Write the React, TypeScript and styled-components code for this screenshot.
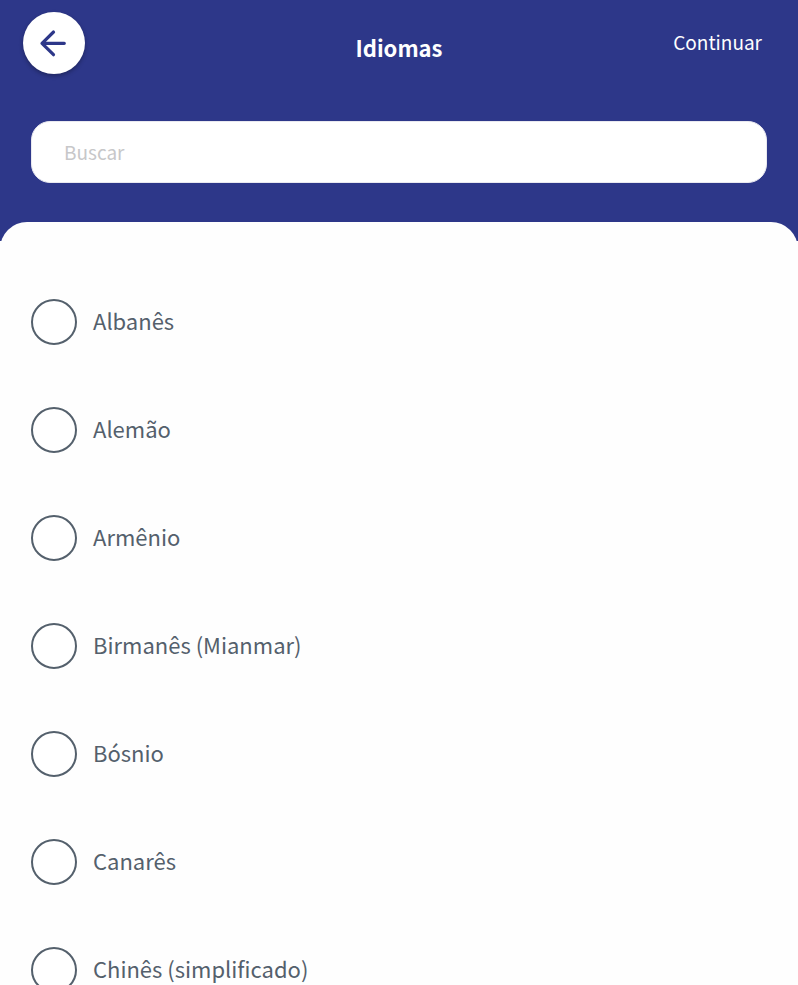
import React, { useState } from "react";
import styled, { createGlobalStyle } from "styled-components";

const blue = "#2d3789";
const slate = "#54606c";

const GlobalStyle = createGlobalStyle`
  *, *::before, *::after { box-sizing: border-box; }
  body {
    margin: 0;
    background: #fefefe;
    font-family: "Noto Sans CJK SC", "Noto Sans", sans-serif;
  }
  button, input { font-family: inherit; }
`;

const Screen = styled.div`
  display: flex;
  flex-direction: column;
  height: 100vh;
  overflow: hidden;
`;

const Header = styled.header`
  flex: none;
  padding: 12px 31px 58px;
  background: ${blue};
`;

const TopBar = styled.div`
  display: grid;
  grid-template-columns: 1fr auto 1fr;
  align-items: center;
  margin: 0 -8px 47px;
`;

const BackButton = styled.button`
  display: grid;
  place-items: center;
  width: 62px;
  height: 62px;
  padding: 0;
  border: 0;
  border-radius: 50%;
  background: #fff;
  color: ${blue};
  box-shadow: 0 2px 4px rgba(0, 0, 0, 0.3);
  cursor: pointer;
`;

const Title = styled.h1`
  margin: 0;
  padding-top: 8px;
  color: #fff;
  font-size: 22px;
  font-weight: 700;
  line-height: 32px;
`;

const ContinueButton = styled.button`
  justify-self: end;
  padding: 0 13px 2px;
  border: 0;
  background: none;
  color: #fff;
  font-size: 19px;
  line-height: 32px;
  cursor: pointer;
`;

const SearchInput = styled.input`
  display: block;
  width: 100%;
  height: 62px;
  padding: 0 32px 2px;
  border: 1px solid #e9e9f0;
  border-radius: 19px;
  background: #fff;
  color: ${slate};
  font-size: 19px;
  outline: 0;

  &::placeholder {
    color: #c7c7c9;
    opacity: 1;
  }
`;

const Panel = styled.main`
  flex: 1;
  min-height: 0;
  margin-top: -19px;
  padding: 77px 31px 0;
  border-radius: 27px 27px 0 0;
  background: #fefefe;
  overflow-y: auto;
  scrollbar-width: none;
`;

const LanguageList = styled.div`
  display: flex;
  flex-direction: column;
  gap: 62px;
`;

const LanguageOption = styled.label`
  display: flex;
  align-items: center;
  gap: 16px;
  color: ${slate};
  font-size: 22px;
  line-height: 28px;
  cursor: pointer;
`;

const LanguageName = styled.span`
  padding-bottom: 4px;
`;

const Radio = styled.input`
  flex: none;
  width: 46px;
  height: 46px;
  margin: 0;
  appearance: none;
  border: 2px solid ${slate};
  border-radius: 50%;
  background: #fff;
  cursor: pointer;

  &:checked {
    border-color: ${blue};
    background: radial-gradient(circle, ${blue} 50%, #fff 52%);
  }
`;

const languages = [
  "Albanês",
  "Alemão",
  "Armênio",
  "Birmanês (Mianmar)",
  "Bósnio",
  "Canarês",
  "Chinês (simplificado)",
];

function BackArrow() {
  return (
    <svg
      width="62"
      height="62"
      viewBox="0 0 62 62"
      fill="none"
      stroke="currentColor"
      strokeWidth="3.2"
      strokeLinecap="round"
      strokeLinejoin="round"
      aria-hidden="true"
    >
      <path d="M41.3 31.3H19M30.5 20L19 31.3L30.5 42.7" />
    </svg>
  );
}

export default function App() {
  const [query, setQuery] = useState("");
  const [selected, setSelected] = useState("");
  const shown = languages.filter((name) =>
    name.toLowerCase().includes(query.toLowerCase())
  );

  return (
    <Screen>
      <GlobalStyle />
      <Header>
        <TopBar>
          <BackButton type="button" aria-label="Voltar">
            <BackArrow />
          </BackButton>
          <Title>Idiomas</Title>
          <ContinueButton type="button">Continuar</ContinueButton>
        </TopBar>
        <SearchInput
          type="text"
          aria-label="Buscar"
          placeholder="Buscar"
          value={query}
          onChange={(event) => setQuery(event.target.value)}
        />
      </Header>
      <Panel>
        <LanguageList role="radiogroup" aria-label="Idiomas">
          {shown.map((name) => (
            <LanguageOption key={name}>
              <Radio
                type="radio"
                name="language"
                value={name}
                checked={selected === name}
                onChange={() => setSelected(name)}
              />
              <LanguageName>{name}</LanguageName>
            </LanguageOption>
          ))}
        </LanguageList>
      </Panel>
    </Screen>
  );
}
